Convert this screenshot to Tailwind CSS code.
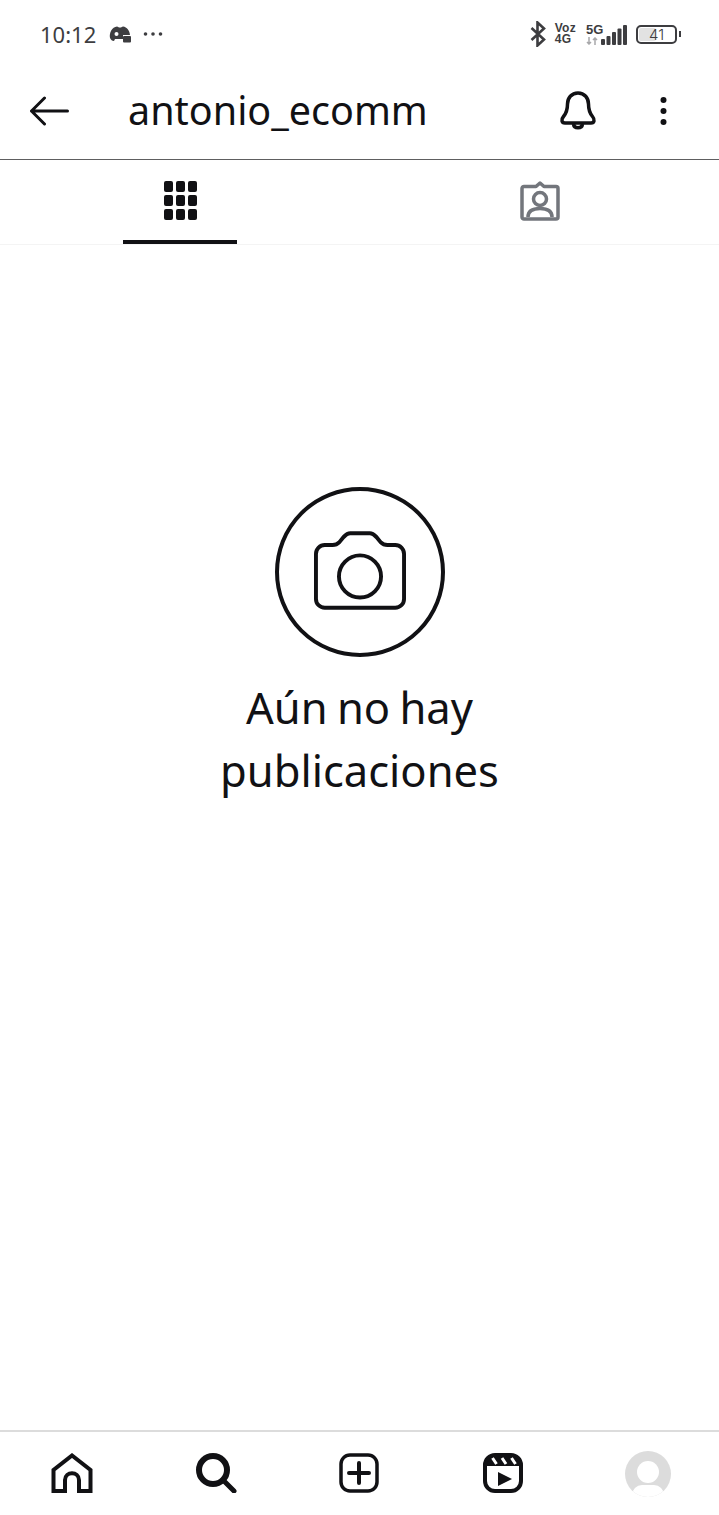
<!DOCTYPE html>
<html lang="es">
<head>
<meta charset="utf-8">
<script src="https://cdn.jsdelivr.net/npm/@tailwindcss/browser@4"></script>
</head>
<body class="bg-white">
<div class="w-[719px] h-[1515px] flex flex-col bg-white text-[#111114] font-['Noto_Sans',sans-serif] overflow-hidden">
  <!-- status bar -->
  <div class="h-[68px] shrink-0 flex items-center pl-[40px] pr-[38px] text-[#3d3d40]">
    <span class="text-[22px] leading-none">10:12</span>
    <svg class="ml-[13px]" width="23" height="20" viewBox="0 0 23 20" fill="#3d3d40"><path d="M1 14C0 9 3 3 8 2.500c1 0 1.500 1 2 1h2c.5 0 1-1 2-1 4 .5 6.500 4 7 8.500h-7v4H6l-1 2c-2 0-3-1-4-3Z"/><rect x="14" y="12" width="8" height="6.500" rx="1"/><circle cx="7.500" cy="10" r="2" fill="#fff"/></svg>
    <svg class="ml-[11px]" width="20" height="6" viewBox="0 0 20 6" fill="#3d3d40"><circle cx="2.500" cy="3" r="1.800"/><circle cx="10" cy="3" r="1.800"/><circle cx="17.500" cy="3" r="1.800"/></svg>
    <div class="ml-auto flex items-center">
      <svg width="16" height="26" viewBox="0 0 16 26" fill="none" stroke="#3d3d40" stroke-width="2.600"><path d="M1.500 7 14 18.500 7.500 24.500V1.500L14 7.500 1.500 19"/></svg>
      <div class="ml-[9px] flex flex-col text-[12px] leading-[11px] font-bold font-['Liberation_Sans',sans-serif] tracking-[0.3px]"><span>Voz</span><span>4G</span></div>
      <div class="ml-[10px] flex flex-col w-[18px]">
        <span class="text-[13px] leading-[12px] font-bold font-['Liberation_Sans',sans-serif]">5G</span>
        <svg class="mt-[1px]" width="12" height="8" viewBox="0 0 12 8" stroke="#a8a8aa" stroke-width="1.500" fill="none"><path d="M3 0v7M1 5l2 2 2-2M9 8V1M7 3l2-2 2 2"/></svg>
      </div>
      <svg class="-ml-[3px] mt-[1px]" width="26" height="20" viewBox="0 0 26 20" fill="#3d3d40"><rect x="0" y="14" width="4" height="6" rx="1"/><rect x="5.500" y="11" width="4" height="9" rx="1"/><rect x="11" y="7" width="4" height="13" rx="1"/><rect x="16.500" y="3.500" width="4" height="16.500" rx="1"/><rect x="22" y="0" width="4" height="20" rx="1"/></svg>
      <div class="ml-[9px] relative w-[41px] h-[19px] rounded-[5px] border-2 border-[#3d3d40] bg-white flex items-center">
        <div class="h-[13px] w-[17px] ml-[1px] bg-[#e2e2e2] rounded-[2px]"></div>
        <span class="absolute inset-0 flex items-center justify-center text-[15px] leading-none font-['Inter',sans-serif] font-light">41</span>
      </div>
      <div class="ml-[2px] w-[2px] h-[6px] bg-[#3d3d40]"></div>
    </div>
  </div>

  <!-- header -->
  <header class="h-[92px] shrink-0 flex items-center border-b border-[#5e5e60] pb-[6px]">
    <svg class="ml-[30px]" width="40" height="30" viewBox="0 0 40 30" fill="none" stroke="#111114" stroke-width="3" stroke-linecap="round" stroke-linejoin="round"><path d="M1.500 15H37.500M14.500 2 1.500 15l13 13"/></svg>
    <h1 class="ml-[58px] text-[39.500px] leading-none font-normal">antonio_ecomm</h1>
    <svg class="ml-auto" width="38" height="40" viewBox="0 0 38 40" fill="none" stroke="#111114" stroke-width="3.500" stroke-linejoin="round"><path d="M19 2c-6.500 0-10.500 5-10.500 11 0 6-1 9-4 12.500C2 28.500 2.500 32 6 32h26c3.500 0 4-3.500 1.500-6.500-3-3.500-4-6.500-4-12.500C29.500 7 25.500 2 19 2Z"/><path d="M14.500 33c.5 5 8.500 5 9 0"/></svg>
    <svg class="ml-[63px] mr-[52px]" width="7" height="30" viewBox="0 0 7 30" fill="#111114"><circle cx="3.500" cy="4" r="3"/><circle cx="3.500" cy="15" r="3"/><circle cx="3.500" cy="26" r="3"/></svg>
  </header>

  <!-- tabs -->
  <div class="h-[85px] shrink-0 grid grid-cols-2 border-b border-[#f4f4f4]">
    <div class="relative flex items-center justify-center pb-[4px]">
      <div class="grid grid-cols-3 gap-[3px] ml-[1px]">
        <i class="block w-[9px] h-[11px] rounded-[2px] bg-[#111114]"></i><i class="block w-[9px] h-[11px] rounded-[2px] bg-[#111114]"></i><i class="block w-[9px] h-[11px] rounded-[2px] bg-[#111114]"></i>
        <i class="block w-[9px] h-[11px] rounded-[2px] bg-[#111114]"></i><i class="block w-[9px] h-[11px] rounded-[2px] bg-[#111114]"></i><i class="block w-[9px] h-[11px] rounded-[2px] bg-[#111114]"></i>
        <i class="block w-[9px] h-[11px] rounded-[2px] bg-[#111114]"></i><i class="block w-[9px] h-[11px] rounded-[2px] bg-[#111114]"></i><i class="block w-[9px] h-[11px] rounded-[2px] bg-[#111114]"></i>
      </div>
      <div class="absolute left-[123px] bottom-0 w-[114px] h-[4px] bg-[#111114]"></div>
    </div>
    <div class="flex items-center justify-center pb-[2px] pl-[1px]">
      <svg width="40" height="40" viewBox="0 0 40 40" fill="none" stroke="#73767c" stroke-width="3.500" stroke-linejoin="round"><path d="M4 5.500h12L20 2l4 3.500h12a2 2 0 0 1 2 2V36a2 2 0 0 1-2 2H4a2 2 0 0 1-2-2V7.500a2 2 0 0 1 2-2Z"/><circle cx="20" cy="18" r="6.500"/><path d="M8 36c0-6 5-8.500 12-8.500S32 30 32 36"/></svg>
    </div>
  </div>

  <!-- empty state -->
  <main class="flex-1 flex flex-col items-center pt-[242px]">
    <div class="w-[170px] h-[170px] rounded-full border-[4px] border-[#111114] flex items-center justify-center">
      <svg class="-mt-[1px]" width="92" height="81" viewBox="0 0 94 82" fill="none" stroke="#111114" stroke-width="4" stroke-linejoin="round"><path d="M11 14h8c3 0 5-1 7-3l4-5c2-2 4-4 7-4h20c3 0 5 2 7 4l4 5c2 2 4 3 7 3h8c5 0 9 4 9 9v46c0 5-4 9-9 9H11c-5 0-9-4-9-9V23c0-5 4-9 9-9Z"/><circle cx="47" cy="46" r="21.500"/></svg>
    </div>
    <p class="mt-[19px] text-[43.500px] leading-[63px] [word-spacing:-2px] text-center w-[320px]">Aún no hay publicaciones</p>
  </main>

  <!-- bottom nav -->
  <nav class="h-[85px] shrink-0 border-t-2 border-[#dcdcdc] grid grid-cols-5 items-center justify-items-center pb-[1px]">
    <svg width="42" height="40" viewBox="0 0 42 40" fill="none" stroke="#111114" stroke-width="4" stroke-linejoin="miter"><path d="M2.500 38V17L21 2.500 39.500 17v21H28V27c0-9-14-9-14 0v11Z"/></svg>
    <svg width="42" height="40" viewBox="0 0 42 40" fill="none" stroke="#111114" stroke-linecap="round"><circle cx="18" cy="17" r="14" stroke-width="6"/><path d="M29 28l10 10" stroke-width="5"/></svg>
    <svg width="40" height="40" viewBox="0 0 40 40" fill="none" stroke="#111114" stroke-width="3.500" stroke-linecap="round"><rect x="2" y="2" width="36" height="36" rx="9"/><path d="M20 10v20M10 20h20" stroke-width="4"/></svg>
    <svg width="40" height="40" viewBox="0 0 40 40" fill="none" stroke="#111114" stroke-width="4"><path d="M3 12c0-6 4-10 10-10h14c6 0 10 4 10 10v1H3Z" fill="#111114" stroke="none"/><rect x="2" y="2" width="36" height="36" rx="10"/><path d="M9.500 5l4 6M19 5l4 6M28.500 5l4 6" stroke="#fff" stroke-width="3"/><path d="M15 19l14 7-14 7Z" fill="#111114" stroke="none"/></svg>
    <div class="relative w-[46px] h-[46px] rounded-full bg-[#dcdcdc] overflow-hidden mt-[1px] ml-[1px]">
      <div class="absolute left-[12px] top-[10px] w-[22px] h-[22px] rounded-full bg-white"></div>
      <div class="absolute left-[7px] top-[34px] w-[32px] h-[20px] rounded-full bg-white"></div>
    </div>
  </nav>
</div>
</body>
</html>
